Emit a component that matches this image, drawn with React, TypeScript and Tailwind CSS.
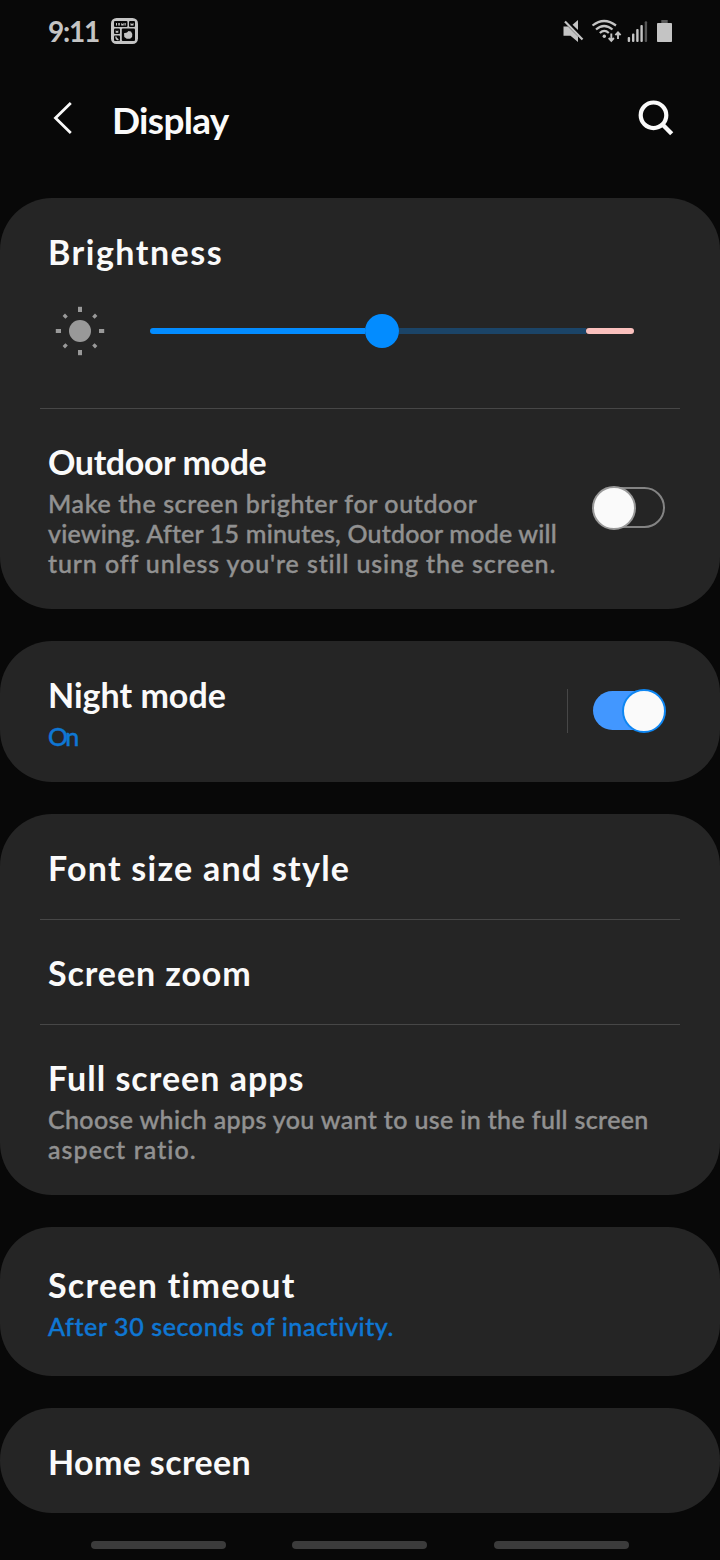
import React, { useState } from 'react'

const titleClass = 'text-[34px] leading-[40px] font-bold text-[#fafafa] whitespace-nowrap'
const subClass = 'text-[25px] leading-[30px] font-medium whitespace-nowrap [-webkit-text-stroke:0.4px]'

function MuteIcon() {
  return (
    <svg width="22" height="24" viewBox="0 0 22 24" fill="#c4c4c4">
      <path d="M1.5 7.5H6L16 17.5V23L8.5 16.8H1.5Z" />
      <path d="M16 1V11L10.5 5.7Z" />
      <path d="M3 2.5L20.5 20.5" stroke="#c4c4c4" strokeWidth="2.2" />
    </svg>
  )
}

function WifiIcon() {
  return (
    <svg width="31" height="24" viewBox="0 0 31 24" fill="none" stroke="#c4c4c4" strokeWidth="2.2">
      <path d="M1.5 6.5Q13 -2.5 25 6.5" />
      <path d="M5 10.5Q13 3.5 21.5 10.5" />
      <path d="M8.8 14Q13.3 9.8 17.8 14" />
      <circle cx="13.3" cy="17.3" r="1.7" fill="#c4c4c4" stroke="none" />
      <path d="M20.3 14.5V21.5M17.7 19L20.3 21.8L22.9 19" strokeWidth="1.9" />
      <path d="M27 20V13.5M24.4 16.2L27 13.4L29.6 16.2" strokeWidth="1.9" />
    </svg>
  )
}

function SignalIcon() {
  return (
    <svg width="21" height="22" viewBox="0 0 21 22" fill="#c4c4c4">
      <rect x="0.7" y="17" width="2.4" height="5" rx="1" />
      <rect x="5" y="13.5" width="2.4" height="8.5" rx="1" />
      <rect x="9.2" y="9" width="2.4" height="13" rx="1" />
      <rect x="13.4" y="5" width="2.4" height="17" rx="1" />
      <rect x="17.7" y="1.2" width="2.4" height="20.8" rx="1" fill="#555" />
    </svg>
  )
}

function BatteryIcon() {
  return (
    <svg width="15" height="22" viewBox="0 0 15 22">
      <rect x="4.3" y="0" width="6.4" height="4" fill="#5a5a5a" />
      <rect x="0" y="3" width="15" height="19" rx="0.8" fill="#c4c4c4" />
    </svg>
  )
}

function WidgetIcon() {
  return (
    <svg width="27" height="26" viewBox="0 0 27 26">
      <rect width="27" height="26" rx="5.5" fill="#c4c4c4" />
      <g fill="#080808">
        <rect x="3" y="3" width="13.5" height="6" rx="1" />
        <rect x="18" y="3" width="6" height="6" rx="1" />
        <rect x="3" y="10.5" width="6" height="5.5" rx="1" />
        <rect x="3" y="17.5" width="6" height="5.5" rx="1" />
        <rect x="10.8" y="10.5" width="13.2" height="12.5" rx="1" />
      </g>
      <g fill="#c4c4c4">
        <path d="M5 5h1v2.5h-1zM7.3 5h1.5v2.5h-1.5zM10.2 5l1.3 1 1.2-1v2.5h-2.5zM13.5 5h1.2v2.5h-1.2z" />
        <path d="M19.5 5l1.5 1 1.5-1v2.6h-3z" />
        <path d="M4.7 12.3l1.3 1 1.3-1v2.5h-2.6z" />
        <path d="M4.3 18.5h1.2l.3 1.3 1.8 1.5v1h-1.3c-1.3-.6-2-1.8-2-3.8z" />
        <path d="M13 15.3l3-.8 1.5-1.4 2.5.4 1.3 2.4-.2 3.2-2 1.7h-3.4l-2.4-1.7z" />
      </g>
    </svg>
  )
}

function SunIcon() {
  return (
    <svg width="50" height="50" viewBox="0 0 50 50" fill="#999">
      <circle cx="25" cy="25" r="11" />
      <rect x="23" y="0.8" width="4" height="5.2" />
      <rect x="23" y="44" width="4" height="5.2" />
      <rect x="0.8" y="23" width="5.2" height="4" />
      <rect x="44" y="23" width="5.2" height="4" />
      <g stroke="#999" strokeWidth="3.4">
        <path d="M8.8 8.8L11.6 11.6M41.2 8.8L38.4 11.6M8.8 41.2L11.6 38.4M41.2 41.2L38.4 38.4" />
      </g>
    </svg>
  )
}

function Toggle({ on, onClick }: { on: boolean; onClick: () => void }) {
  return (
    <button onClick={onClick} role="switch" aria-checked={on} className="mb-1 block">
      <svg width="74" height="46" viewBox="0 0 74 46">
        {on ? (
          <>
            <rect x="1" y="3" width="72" height="39" rx="19.5" fill="#4297ff" />
            <circle cx="52" cy="23" r="21" fill="#fafafa" stroke="#0e86f2" strokeWidth="2" />
          </>
        ) : (
          <>
            <rect x="2" y="3" width="70" height="39" rx="19.5" fill="none" stroke="#848484" strokeWidth="2" />
            <circle cx="22" cy="23" r="21" fill="#fafafa" stroke="#999" strokeWidth="2" />
          </>
        )}
      </svg>
    </button>
  )
}

function Card({ children }: { children: React.ReactNode }) {
  return <section className="rounded-[52px] bg-[#252525]">{children}</section>
}

function Divider() {
  return <div className="mx-10 h-px bg-[#474747]" />
}

export default function App() {
  const [outdoor, setOutdoor] = useState(false)
  const [night, setNight] = useState(true)

  return (
    <div className="flex h-[1560px] w-[720px] flex-col overflow-hidden bg-[#080808] font-['Lato','Noto_Sans',sans-serif] [font-variant-ligatures:none]">
      {/* Status bar */}
      <div className="flex h-[62px] items-center justify-between px-12">
        <div className="flex items-center">
          <span className="w-[63px] text-[28px] leading-8 font-bold tracking-[-1.2px] text-[#c4c4c4]">9:11</span>
          <WidgetIcon />
        </div>
        <div className="flex items-center">
          <MuteIcon />
          <div className="ml-[7px]"><WifiIcon /></div>
          <div className="ml-[5px]"><SignalIcon /></div>
          <div className="ml-[9px]"><BatteryIcon /></div>
        </div>
      </div>

      {/* Header */}
      <header className="flex h-[136px] items-start justify-between pt-[37px] pr-[45px] pl-[52px]">
        <div className="flex">
          <svg width="60" height="38" viewBox="0 0 60 38" fill="none" stroke="#fafafa" strokeWidth="2.8">
            <path d="M18.8 4L3.5 19L18.8 34" />
          </svg>
          <h1 className="text-[37px] leading-[42px] font-bold tracking-[-0.7px] text-[#fafafa]">Display</h1>
        </div>
        <svg width="38" height="38" viewBox="0 0 38 38" fill="none" stroke="#fafafa">
          <circle cx="16.5" cy="16.3" r="12.8" strokeWidth="4.2" />
          <path d="M25.5 25.5L34.7 34.7" strokeWidth="4.4" />
        </svg>
      </header>

      <main className="flex flex-col gap-8">
        <Card>
          <div className="h-[210px] px-12 pt-[34px]">
            <h2 className={`${titleClass} tracking-[1.5px]`}>Brightness</h2>
            <div className="mt-[34px] flex items-center pl-[7px]">
              <SunIcon />
              <div className="ml-[45px] flex h-[34px] w-[484px] items-center">
                <div className="h-1.5 w-[215px] rounded-l-full bg-[#038cff]" />
                <div className="size-[34px] rounded-full bg-[#038cff]" />
                <div className="h-1.5 w-[187px] bg-[#1b4467]" />
                <div className="h-1.5 w-12 rounded-full bg-[#fac0bd]" />
              </div>
            </div>
          </div>
          <Divider />
          <div className="flex items-center justify-between pt-[33px] pr-[54px] pb-[31px] pl-12">
            <div>
              <h2 className={`${titleClass} tracking-[-0.4px]`}>Outdoor mode</h2>
              <p className={`${subClass} mt-1.5 text-[#919191]`}>
                <span className="tracking-[0.6px]">Make the screen brighter for outdoor</span><br />
                <span className="tracking-[0.2px]">viewing. After 15 minutes, Outdoor mode will</span><br />
                <span className="tracking-[0.88px]">turn off unless you're still using the screen.</span>
              </p>
            </div>
            <Toggle on={outdoor} onClick={() => setOutdoor(!outdoor)} />
          </div>
        </Card>

        <Card>
          <div className="flex items-center justify-between pt-[34px] pr-[54px] pb-[31px] pl-12">
            <div>
              <h2 className={`${titleClass} tracking-[0px]`}>Night mode</h2>
              <p className={`${subClass} mt-1.5 tracking-[-2.5px] text-[#0f77d3]`}>On</p>
            </div>
            <div className="flex items-center">
              <div className="mr-6 mb-1 h-11 w-px bg-[#474747]" />
              <Toggle on={night} onClick={() => setNight(!night)} />
            </div>
          </div>
        </Card>

        <Card>
          <div className="h-[105px] px-12 pt-[34px]">
            <h2 className={`${titleClass} tracking-[1.25px]`}>Font size and style</h2>
          </div>
          <Divider />
          <div className="h-[104px] px-12 pt-[33px]">
            <h2 className={`${titleClass} tracking-[0.9px]`}>Screen zoom</h2>
          </div>
          <Divider />
          <div className="px-12 pt-[33px] pb-[31px]">
            <h2 className={`${titleClass} tracking-[1px]`}>Full screen apps</h2>
            <p className={`${subClass} mt-1.5 text-[#919191]`}>
              <span className="tracking-[0.36px]">Choose which apps you want to use in the full screen</span><br />
              <span className="tracking-[1.1px]">aspect ratio.</span>
            </p>
          </div>
        </Card>

        <Card>
          <div className="px-12 pt-[38px] pb-[35px]">
            <h2 className={`${titleClass} tracking-[1.25px]`}>Screen timeout</h2>
            <p className={`${subClass} mt-1.5 tracking-[0.6px] text-[#0f77d3]`}>After 30 seconds of inactivity.</p>
          </div>
        </Card>

        <Card>
          <div className="h-[105px] px-12 pt-[34px]">
            <h2 className={`${titleClass} tracking-[0.35px]`}>Home screen</h2>
          </div>
        </Card>
      </main>

      {/* Navigation hints */}
      <div className="mt-7 flex pl-[91px]">
        <div className="h-2 w-[135px] rounded-full bg-[#3b3b3b]" />
        <div className="ml-[66px] h-2 w-[135px] rounded-full bg-[#3b3b3b]" />
        <div className="ml-[67px] h-2 w-[135px] rounded-full bg-[#3b3b3b]" />
      </div>
    </div>
  )
}
